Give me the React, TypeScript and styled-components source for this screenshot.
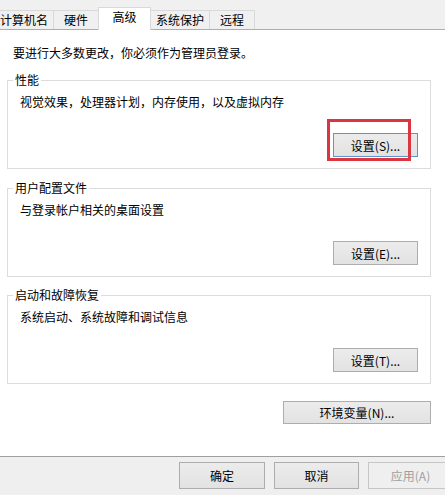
import styled, { createGlobalStyle } from "styled-components";

const GlobalStyle = createGlobalStyle`
  html, body {
    margin: 0;
    padding: 0;
    background: #ffffff;
    overflow: hidden;
  }
  body {
    font-family: "Noto Sans CJK SC", "Liberation Sans", sans-serif;
    font-size: 12px;
    color: #000000;
  }
`;

const Dialog = styled.div`
  width: 445px;
  height: 495px;
  display: flex;
  flex-direction: column;
  overflow: hidden;
`;

const TabStrip = styled.div`
  height: 29px;
  flex: none;
  display: flex;
  align-items: flex-end;
  background: #f0f0f0;
  border-bottom: 1px solid #adadad;
  padding-left: 0;
  margin-left: -5px;
`;

const Tab = styled.div<{ $active?: boolean }>`
  box-sizing: border-box;
  min-width: ${(p) => (p.$active ? 53 : 46)}px;
  height: ${(p) => (p.$active ? 23 : 19)}px;
  margin-bottom: ${(p) => (p.$active ? -1 : 0)}px;
  margin-left: -1px;
  padding: 0 5px;
  display: flex;
  justify-content: center;
  align-items: ${(p) => (p.$active ? "flex-start" : "center")};
  line-height: 18px;
  background: ${(p) => (p.$active ? "#ffffff" : "#f0f0f0")};
  border: 1px solid #d9d9d9;
  border-bottom: none;
  position: relative;
  z-index: ${(p) => (p.$active ? 1 : 0)};
`;

const Panel = styled.div`
  height: 427px;
  flex: none;
  box-sizing: border-box;
  background: #ffffff;
  border-bottom: 1px solid #a0a0a0;
  padding: 15px 14px 0 7px;
  display: flex;
  flex-direction: column;
`;

const Notice = styled.div`
  line-height: 16px;
  margin-left: 6px;
`;

const Group = styled.fieldset<{ $gap: number }>`
  margin: ${(p) => p.$gap}px 0 0 0;
  padding: 0;
  border: 1px solid #dcdcdc;
  min-width: 0;
`;

const Legend = styled.legend`
  margin-left: 5px;
  padding: 0 2px;
  line-height: 16px;
`;

const GroupBody = styled.div`
  padding: 6px 12px 11px 12px;
  display: flex;
  flex-direction: column;
`;

const Desc = styled.div`
  line-height: 16px;
`;

const ButtonRow = styled.div<{ $top: number }>`
  display: flex;
  justify-content: flex-end;
  margin-top: ${(p) => p.$top}px;
`;

const Button = styled.button<{ $w: number; $h: number; $focused?: boolean }>`
  box-sizing: border-box;
  width: ${(p) => p.$w}px;
  height: ${(p) => p.$h}px;
  padding: 0;
  font: inherit;
  font-size: 12px;
  color: #000000;
  background: linear-gradient(#ececec, #e2e2e2);
  border: 1px solid ${(p) => (p.$focused ? "#5a95d0" : "#adadad")};
  position: relative;
  &:disabled {
    color: #a0a0a0;
    background: #efefef;
    border-color: #c6c6c6;
  }
`;

const Highlight = styled.span`
  position: absolute;
  left: -7px;
  top: -15px;
  width: 84px;
  height: 42px;
  box-sizing: border-box;
  border: 3px solid #dc3540;
  pointer-events: none;
`;

const EnvRow = styled.div`
  display: flex;
  justify-content: flex-end;
  margin-top: 17px;
`;

const Footer = styled.div`
  flex: 1;
  background: #efefef;
  display: flex;
  justify-content: flex-end;
  align-items: flex-start;
  padding-top: 5px;
  gap: 9px;
`;

const ApplyButton = styled(Button)`
  margin-right: -8px;
`;

const tabs = ["计算机名", "硬件", "高级", "系统保护", "远程"];

const groups = [
  {
    title: "性能",
    desc: "视觉效果，处理器计划，内存使用，以及虚拟内存",
    button: "设置(S)...",
    gap: 11,
    focused: true,
  },
  {
    title: "用户配置文件",
    desc: "与登录帐户相关的桌面设置",
    button: "设置(E)...",
    gap: 11,
  },
  {
    title: "启动和故障恢复",
    desc: "系统启动、系统故障和调试信息",
    button: "设置(T)...",
    gap: 10,
  },
];

export default function App() {
  return (
    <Dialog>
      <GlobalStyle />
      <TabStrip>
        {tabs.map((t) => (
          <Tab key={t} $active={t === "高级"}>
            {t}
          </Tab>
        ))}
      </TabStrip>
      <Panel>
        <Notice>要进行大多数更改，你必须作为管理员登录。</Notice>
        {groups.map((g) => (
          <Group key={g.title} $gap={g.gap}>
            <Legend>{g.title}</Legend>
            <GroupBody>
              <Desc>{g.desc}</Desc>
              <ButtonRow $top={23}>
                <Button $w={85} $h={24} $focused={g.focused}>
                  {g.focused && <Highlight />}
                  {g.button}
                </Button>
              </ButtonRow>
            </GroupBody>
          </Group>
        ))}
        <EnvRow>
          <Button $w={148} $h={23}>
            环境变量(N)...
          </Button>
        </EnvRow>
      </Panel>
      <Footer>
        <Button $w={86} $h={27}>
          确定
        </Button>
        <Button $w={85} $h={27}>
          取消
        </Button>
        <ApplyButton $w={85} $h={27} disabled>
          应用(A)
        </ApplyButton>
      </Footer>
    </Dialog>
  );
}
